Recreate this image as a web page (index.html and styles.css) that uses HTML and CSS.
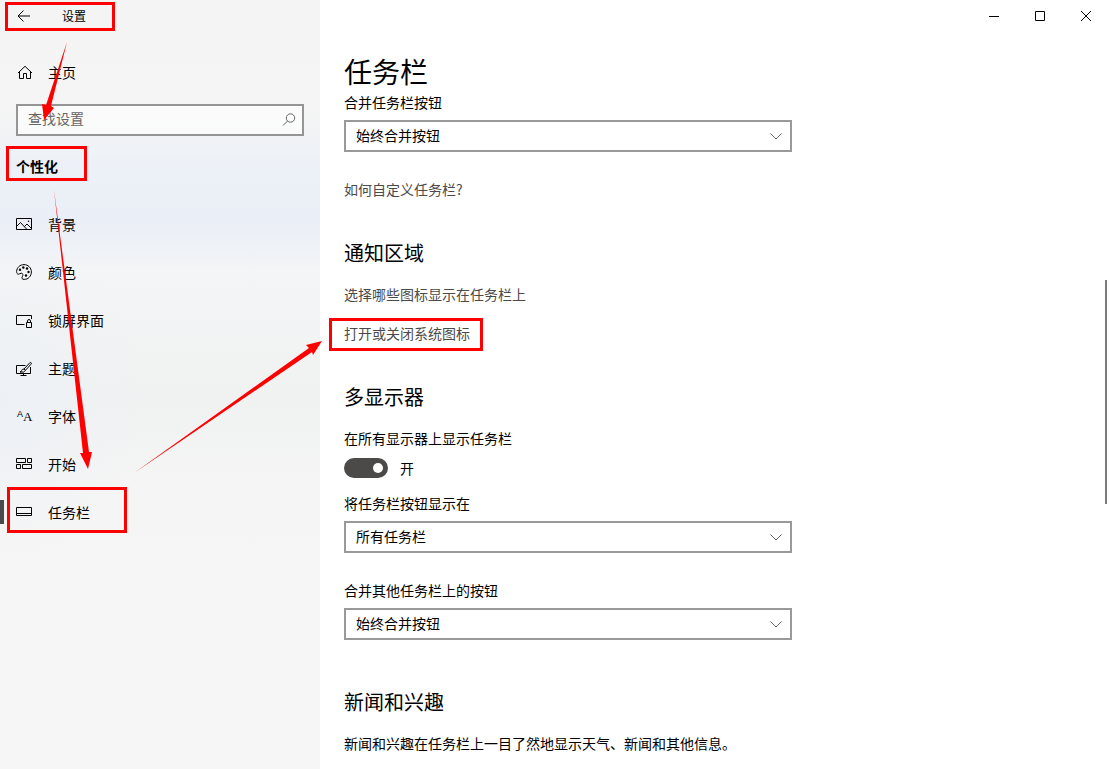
FILE: index.html
```html
<!DOCTYPE html>
<html lang="zh-CN">
  <head>
    <meta charset="utf-8" />
    <title>设置</title>
    <meta name="viewport" content="width=device-width, initial-scale=1" />
    <link rel="stylesheet" href="styles.css">
  </head>
  <body>
    <div class="window">
      <aside class="sidebar">
        <header class="titlebar">
          <button class="back" type="button" aria-label="返回">
            <svg class="icon" viewBox="0 0 16 16"><path d="M2.500 8H14M7.500 2.500L2 8l5.500 5.500" /></svg>
          </button>
          <span class="app-name">设置</span>
        </header>

        <a class="nav-link" href="#home">
          <svg class="icon" viewBox="0 0 16 16"><path d="M2 9L9 2.300 16 9M3.500 7.800V14.500H7.500V9.500H10.500V14.500H14.500V7.800" /></svg>
          主页
        </a>

        <form class="search">
          <input class="search-input" type="search" placeholder="查找设置" aria-label="查找设置" />
          <svg class="icon search-icon" viewBox="0 0 16 16"><circle cx="9.500" cy="6" r="4.200" /><path d="M6.500 9L2 13.500" /></svg>
        </form>

        <h2 class="category">个性化</h2>

        <nav>
          <a class="nav-link" href="#background">
            <svg class="icon" viewBox="0 0 16 16"><path d="M.5 2.500h15v11H.5zM.5 10.500l4-4 6.500 7M8.500 10.500l2.500-2.500 4.500 4.500" /><circle class="solid" cx="12.500" cy="5.300" r=".8" /></svg>
            背景
          </a>
          <a class="nav-link" href="#colors">
            <svg class="icon" viewBox="0 0 16 16">
              <path d="M.6 7.500C.8 3.500 4 .6 8 .6s7.400 3.200 7.400 7.300-3 7.500-7.200 7.500c-2.300 0-2.700-1.300-1.900-2.600.9-1.500.8-3.600-1-3.600-1.300 0-1.500 1-2.700 1C1.200 10.200.6 9 .6 7.500z" />
              <g class="solid"><circle cx="4" cy="5.800" r="1.200" /><circle cx="7.300" cy="3.500" r="1.200" /><circle cx="11" cy="4.500" r="1.200" /><circle cx="12.500" cy="8" r="1.200" /><circle cx="10" cy="11.500" r="1.200" /></g>
            </svg>
            颜色
          </a>
          <a class="nav-link" href="#lockscreen">
            <svg class="icon" viewBox="0 0 16 16"><path d="M8.500 12.500H.5v-9h15V7M10.500 10.500h5v5h-5zM11.500 10.500V9q0-1.500 1.500-1.500T14.500 9v1.500" /></svg>
            锁屏界面
          </a>
          <a class="nav-link" href="#themes">
            <svg class="icon" viewBox="0 0 16 16"><path d="M9.500 5.500H.5v8h14V7M7.500 13.500v2M4.500 15.500h6M8 9L13.800 2.800q1-.8 1.400 0t-.2 1.400L9.500 10.300zM8 9q-2 0-2.300 1.500T4 12q4.500 1 5.500-1.700" /></svg>
            主题
          </a>
          <a class="nav-link" href="#fonts">
            <svg class="icon letters" viewBox="0 0 16 16" aria-hidden="true"><text class="small-a" x="1" y="9">A</text><text class="large-a" x="7" y="13">A</text></svg>
            字体
          </a>
          <a class="nav-link" href="#start">
            <svg class="icon" viewBox="0 0 16 16"><path d="M.5 2.500h9v4h-9zM11.500 2.500h4v4h-4zM.5 8.500h4v4h-4zM6.500 8.500h9v4h-9z" /></svg>
            开始
          </a>
          <a class="nav-link selected" href="#taskbar" aria-current="page">
            <svg class="icon" viewBox="0 0 16 16"><path d="M.5 3.500h15v8H.5zM.5 9.500h15" /></svg>
            任务栏
          </a>
        </nav>
      </aside>

      <main class="content">
        <div class="window-controls">
          <button type="button" aria-label="最小化"><svg viewBox="0 0 11 11"><path d="M0 5.500h10" /></svg></button>
          <button type="button" aria-label="最大化"><svg viewBox="0 0 11 11"><path d="M.5.500h9v9h-9z" /></svg></button>
          <button type="button" aria-label="关闭"><svg viewBox="0 0 11 11"><path d="M0 0l10 10M10 0L0 10" /></svg></button>
        </div>

        <div class="page">
          <h1>任务栏</h1>
          <div class="field">
            <label for="combine">合并任务栏按钮</label>
            <div class="dropdown">
              <select id="combine"><option>始终合并按钮</option></select>
              <svg class="chevron" viewBox="0 0 12 7"><path d="M.5.500L6 6 11.500.500" /></svg>
            </div>
          </div>
          <a class="link help" href="#help">如何自定义任务栏?</a>

          <section>
            <h2>通知区域</h2>
            <a class="link" href="#icons">选择哪些图标显示在任务栏上</a>
            <a class="link" href="#system-icons">打开或关闭系统图标</a>
          </section>

          <section>
            <h2>多显示器</h2>
            <label for="all-displays">在所有显示器上显示任务栏</label>
            <div class="toggle">
              <input id="all-displays" type="checkbox" role="switch" checked />
              <span>开</span>
            </div>
            <div class="field">
              <label for="show-on">将任务栏按钮显示在</label>
              <div class="dropdown">
                <select id="show-on"><option>所有任务栏</option></select>
                <svg class="chevron" viewBox="0 0 12 7"><path d="M.5.500L6 6 11.500.500" /></svg>
              </div>
            </div>
            <div class="field spaced">
              <label for="combine-other">合并其他任务栏上的按钮</label>
              <div class="dropdown">
                <select id="combine-other"><option>始终合并按钮</option></select>
                <svg class="chevron" viewBox="0 0 12 7"><path d="M.5.500L6 6 11.500.500" /></svg>
              </div>
            </div>
          </section>

          <section class="news">
            <h2>新闻和兴趣</h2>
            <p>新闻和兴趣在任务栏上一目了然地显示天气、新闻和其他信息。</p>
          </section>
        </div>
        <div class="scroll-thumb"></div>
      </main>

      <!-- red boxes and arrows showing the click order -->
      <svg class="marks" width="500" height="560" viewBox="0 0 500 560" aria-hidden="true">
        <rect x="6.500" y="3.500" width="107" height="26" />
        <rect x="7.500" y="147.500" width="78" height="32" />
        <rect x="8.500" y="488.500" width="117" height="43" />
        <rect x="330.500" y="319.500" width="151" height="30" />
        <polygon points="67,42 51,106 54,108 44,120 42,104 46,105" />
        <polygon points="54,190 89,452 92,452 88,469 80,453 83,453" />
        <polygon points="134,473 309,348 306,345 322,341 313,355 312,352" />
      </svg>
    </div>
  </body>
</html>
```
FILE: styles.css
```css
* {
  box-sizing: border-box;
}
body {
  margin: 0;
  background: #fff;
  color: #000;
  font: 14px/20px 'Noto Sans CJK SC', 'Microsoft YaHei', sans-serif;
}
h1,
h2,
p {
  margin: 0;
  font-weight: normal;
}
a {
  color: inherit;
  text-decoration: none;
}
button {
  padding: 0;
  border: 0;
  background: none;
}
svg {
  display: block;
  fill: none;
  stroke: #000;
}

.window {
  position: relative;
  display: grid;
  grid-template-columns: 320px 1fr;
  height: 100vh;
  overflow: hidden;
}

/* sidebar */
.sidebar {
  background:
    radial-gradient(circle at 0 400px, #edf1f6, transparent 150px),
    linear-gradient(
      #f4f4f4 0,
      #f5f5f5 110px,
      #ecf0f7 170px,
      #eaeef6 220px,
      #f3f5f7 270px,
      #f2f3f3 340px,
      #f0f1f1 400px,
      #f5f5f5 480px,
      #f6f6f6 100%
    );
}
.titlebar {
  display: flex;
  align-items: center;
  height: 32px;
  margin-bottom: 16px;
  font-size: 12px;
}
.back {
  width: 48px;
  height: 32px;
  padding-left: 16px;
}
.app-name {
  padding-left: 14px;
}
.icon {
  flex: none;
  width: 16px;
  height: 16px;
  overflow: visible;
}
.solid {
  fill: #000;
  stroke: none;
}
.letters text {
  fill: #000;
  stroke: none;
}
.small-a {
  font: 9px 'Liberation Sans', sans-serif;
}
.large-a {
  font: 13px 'Liberation Serif', serif;
}
.nav-link {
  position: relative;
  display: flex;
  align-items: center;
  gap: 16px;
  height: 48px;
  padding-left: 16px;
}
.selected::before {
  content: '';
  position: absolute;
  left: 0;
  width: 4px;
  height: 24px;
  background: #4c4a48;
}
.search {
  display: grid;
  align-items: center;
  margin: 8px 16px 0;
}
.search-input,
.search-icon {
  grid-area: 1 / 1;
}
.search-input {
  width: 100%;
  height: 32px;
  padding: 0 32px 4px 10px;
  border: 2px solid #959595;
  border-radius: 0;
  background: rgba(255, 255, 255, 0.6);
  font: inherit;
  outline: none;
  appearance: none;
}
.search-input::placeholder {
  color: #666;
}
.search-icon {
  justify-self: end;
  margin-right: 7px;
  stroke: #666;
}
.category {
  margin-bottom: 4px;
  padding-left: 16px;
  font-size: 14px;
  line-height: 60px;
  font-weight: bold;
}

/* content */
.content {
  position: relative;
}
.window-controls {
  display: flex;
  justify-content: flex-end;
}
.window-controls button {
  display: grid;
  place-items: center;
  width: 46px;
  height: 32px;
}
.window-controls svg {
  width: 11px;
  height: 11px;
}
.page {
  max-width: 496px;
  padding: 21px 24px 0;
}
h1 {
  margin-bottom: 3px;
  font-size: 28px;
  line-height: 36px;
}
.page h2 {
  margin-bottom: 17px;
  font-size: 20px;
  line-height: 28px;
}
section {
  margin-top: 40px;
}
.news {
  margin-top: 48px;
}
label {
  display: block;
}
.dropdown {
  display: grid;
  align-items: center;
  margin-top: 8px;
}
.dropdown select,
.chevron {
  grid-area: 1 / 1;
}
.dropdown select {
  width: 100%;
  height: 32px;
  padding: 0 32px 2px 10px;
  border: 2px solid #999;
  border-radius: 0;
  background: #fff;
  color: #000;
  font: inherit;
  appearance: none;
}
.chevron {
  justify-self: end;
  width: 12px;
  height: 7px;
  margin-right: 10px;
  stroke: #666;
  pointer-events: none;
}
.link {
  display: block;
  width: fit-content;
  color: #4c4a48;
}
.link + .link {
  margin-top: 19px;
}
.help,
.spaced {
  margin-top: 27px;
}
.toggle {
  display: flex;
  align-items: center;
  gap: 12px;
  margin: 10px 0 15px;
}
.toggle input {
  display: flex;
  align-items: center;
  justify-content: flex-end;
  width: 44px;
  height: 20px;
  margin: 0;
  padding: 0 5px;
  border-radius: 10px;
  background: #4c4a48;
  appearance: none;
}
.toggle input::before {
  content: '';
  width: 10px;
  height: 10px;
  border-radius: 50%;
  background: #fff;
}
.toggle input:not(:checked) {
  justify-content: flex-start;
  background: #999;
}
.scroll-thumb {
  position: absolute;
  top: 280px;
  right: 2px;
  width: 2px;
  height: 224px;
  background: #7a7a7a;
}

.marks {
  position: absolute;
  top: 0;
  left: 0;
  pointer-events: none;
}
.marks rect {
  stroke: #f00;
  stroke-width: 3;
}
.marks polygon {
  fill: #f00;
  stroke: none;
}
```
